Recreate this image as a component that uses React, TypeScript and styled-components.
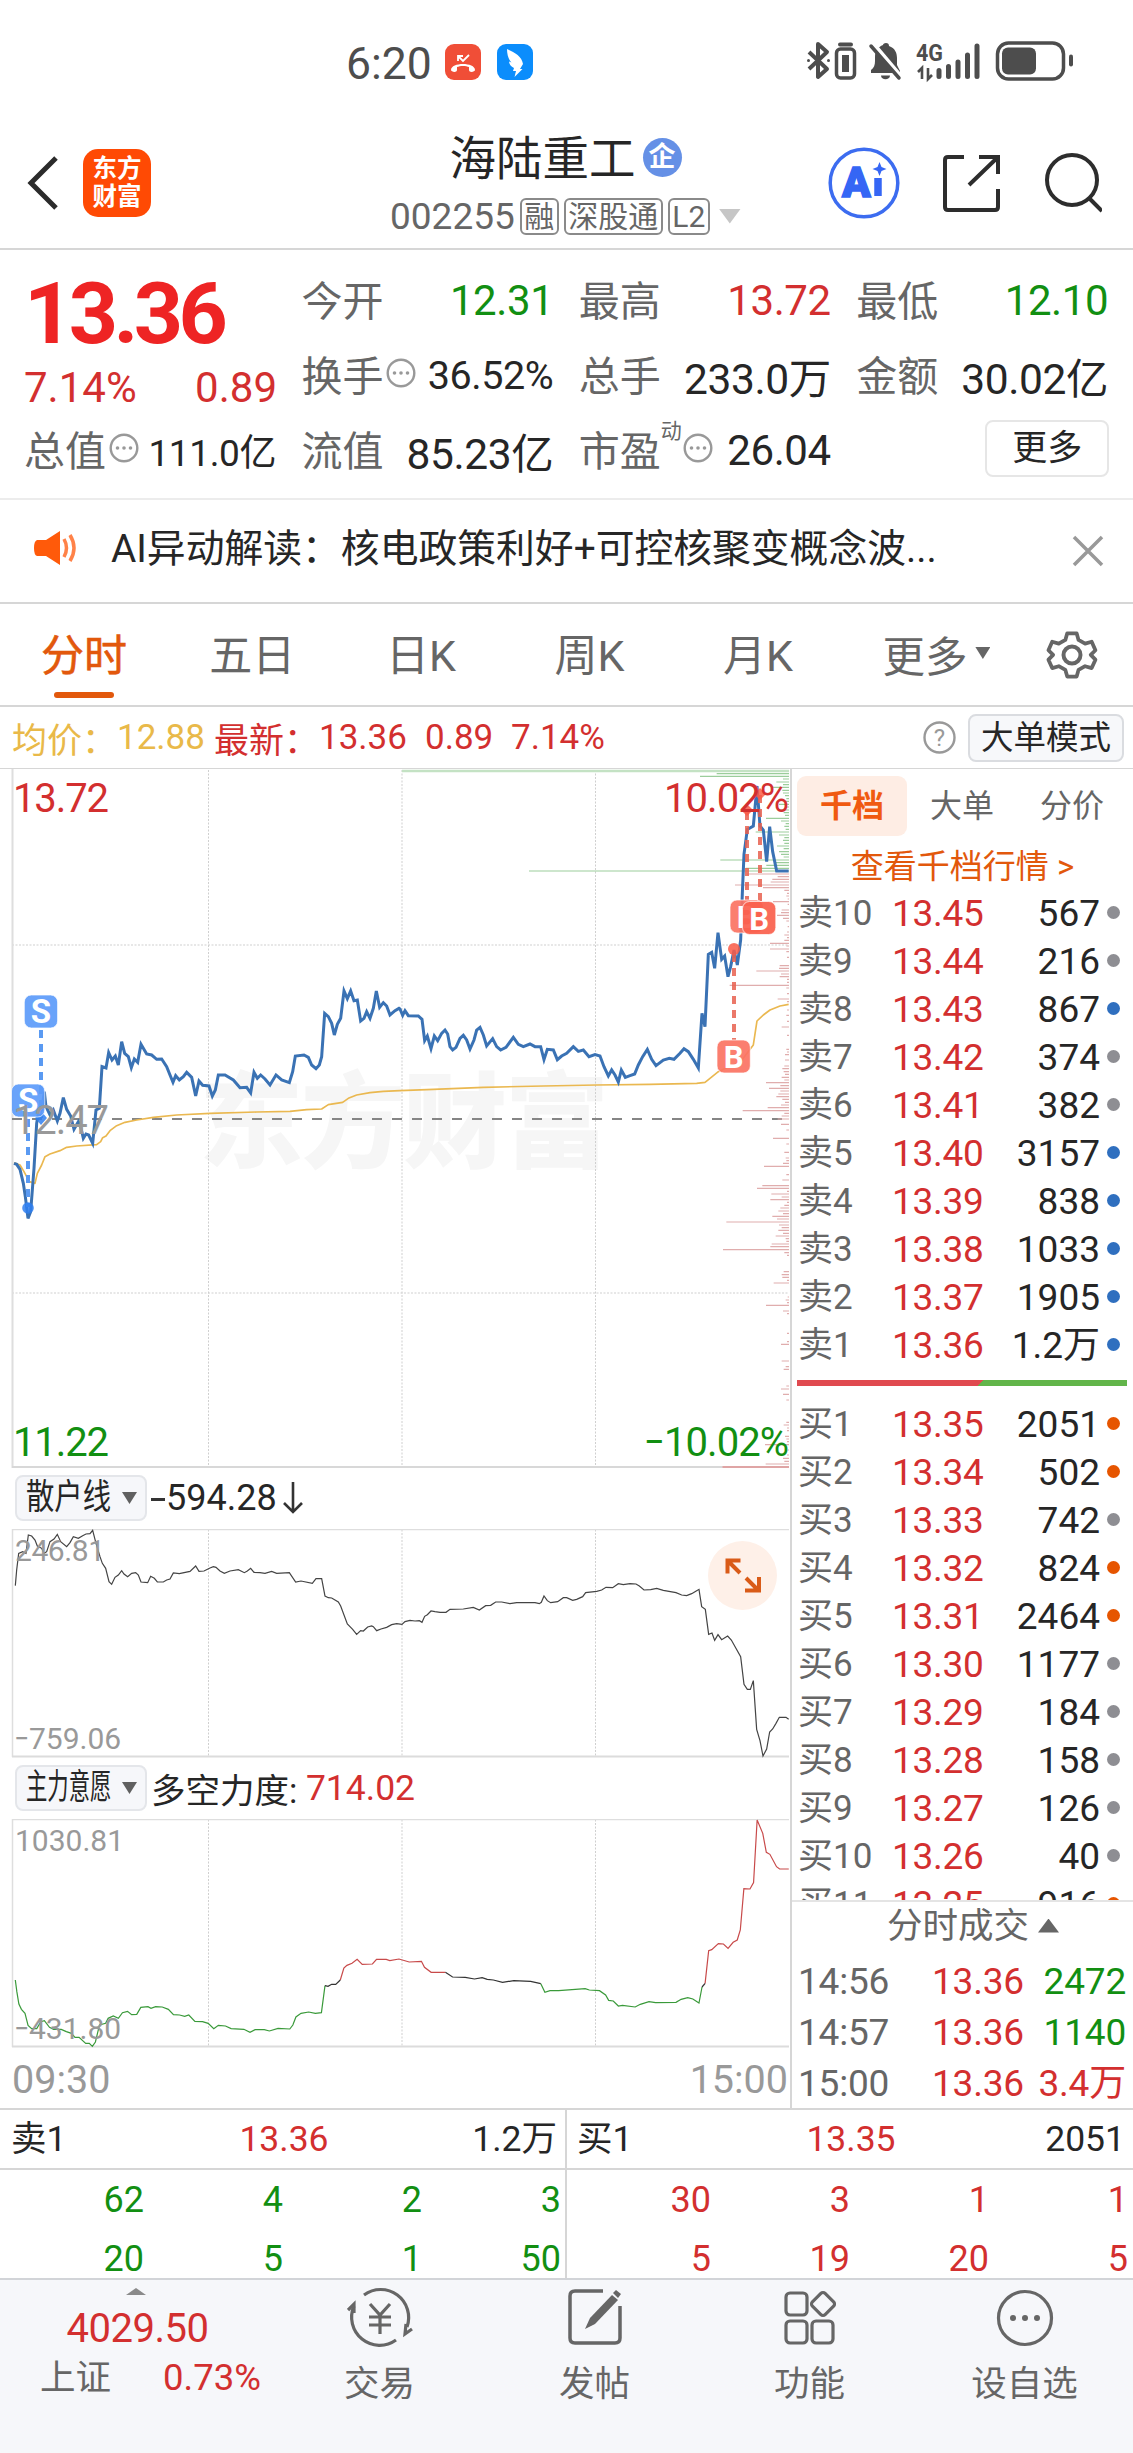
import React from "react";
import styled, { createGlobalStyle } from "styled-components";

const RED = "#d32f2f";
const GREEN = "#128f12";
const INK = "#262626";
const GREY = "#666666";
const PALE = "#999999";
const LINE = "#d6d6d6";
const ACCENT = "#e2580c";

const Global = createGlobalStyle`
  * { box-sizing: border-box; }
  body { margin: 0; background: #fff; }
  #root { font-family: Roboto, "Noto Sans CJK SC", sans-serif; color: ${INK}; }
  svg { display: block; flex: none; }
`;

const Screen = styled.div`
  width: 1133px;
  height: 2453px;
  overflow: hidden;
  background: #fff;
  display: flex;
  flex-direction: column;
  white-space: nowrap;
`;

/* ---------- status bar ---------- */
const StatusBar = styled.div`
  height: 124px;
  flex: none;
  display: flex;
  align-items: center;
  padding: 0 58px 0 346px;
  justify-content: space-between;
  color: #4d4d4d;
`;
const StatusGroup = styled.div`
  display: flex;
  align-items: center;
`;
const Clock = styled.span`
  font-size: 44.5px;
  line-height: 50px;
  width: 99px;
  padding-top: 4px;
`;

/* ---------- header ---------- */
const Header = styled.header`
  height: 126px;
  flex: none;
  border-bottom: 2px solid ${LINE};
  display: grid;
  grid-template-columns: 390px 351px 1fr;
`;
const HeaderSide = styled.div<{ $end?: boolean }>`
  height: 118px;
  display: flex;
  align-items: center;
  justify-content: ${(p) => (p.$end ? "flex-end" : "flex-start")};
  padding: ${(p) => (p.$end ? "0 31px 0 0" : "0 0 0 26px")};
`;
const Brand = styled.div`
  width: 68px;
  height: 68px;
  margin-left: 24px;
  border-radius: 15px;
  background: #ff4a04;
  color: #fff;
  font-weight: 700;
  font-size: 24.5px;
  line-height: 28px;
  display: flex;
  flex-direction: column;
  align-items: center;
  justify-content: center;
`;
const TitleBlock = styled.div`
  padding-top: 3px;
  display: flex;
  flex-direction: column;
  gap: 7px;
`;
const TitleRow = styled.div`
  height: 60px;
  display: flex;
  align-items: center;
  justify-content: center;
  gap: 7px;
  font-size: 46.5px;
`;
const TitleText = styled.span`
  padding-bottom: 5px;
`;
const Badge = styled.span`
  width: 39px;
  height: 39px;
  border-radius: 50%;
  background: #6590e6;
  color: #fff;
  font-weight: 700;
  font-size: 27px;
  line-height: 38px;
  text-align: center;
`;
const CodeRow = styled.div`
  height: 44px;
  display: flex;
  align-items: center;
  gap: 5px;
  font-size: 37px;
  color: ${GREY};
`;
const Tag = styled.span`
  height: 37px;
  border: 2px solid #8a8a8a;
  border-radius: 6px;
  padding: 0 2.5px;
  font-size: 30px;
  line-height: 33px;
`;
const Wedge = styled.i<{ $w: number; $h: number; $c: string; $up?: boolean; $ml?: number }>`
  width: ${(p) => p.$w}px;
  height: ${(p) => p.$h}px;
  margin-left: ${(p) => p.$ml ?? 0}px;
  background: ${(p) => p.$c};
  clip-path: ${(p) => (p.$up ? "polygon(50% 0,100% 100%,0 100%)" : "polygon(0 0,100% 0,50% 100%)")};
  flex: none;
`;

/* ---------- quote summary ---------- */
const Quote = styled.section`
  height: 250px;
  flex: none;
  border-bottom: 2px solid #ececec;
  padding: 13px 23px 0 24px;
  display: grid;
  grid-template-columns: repeat(4, 253px);
  grid-template-rows: repeat(3, 75px);
  column-gap: 24.4px;
`;
const LastPrice = styled.div`
  grid-row: 1 / 3;
  display: flex;
  flex-direction: column;
  color: ${RED};
`;
const BigPrice = styled.div`
  height: 100px;
  line-height: 101px;
  font-size: 86px;
  font-weight: 700;
  color: #ee2424;
  letter-spacing: -4.6px;
`;
const ChangeRow = styled.div`
  height: 50px;
  display: flex;
  justify-content: space-between;
  line-height: 50px;
  font-size: 42px;
`;
const Stat = styled.div`
  display: flex;
  align-items: center;
  font-size: 41px;
`;
const StatLabel = styled.span<{ $lift?: boolean }>`
  color: ${GREY};
  padding-bottom: ${(p) => (p.$lift ? 5 : 0)}px;
`;
const StatValue = styled.span<{ $c?: string; $s?: number }>`
  margin-left: auto;
  padding: 0 1px 1px 0;
  font-size: ${(p) => p.$s ?? 42}px;
  letter-spacing: -0.4px;
  color: ${(p) => p.$c ?? INK};
`;
const Sup = styled.sup`
  font-size: 21px;
  line-height: 20px;
  align-self: flex-start;
  margin-top: 8px;
  color: ${GREY};
`;
const MoreButton = styled.button`
  width: 124px;
  height: 57px;
  margin: 7px 0 0 auto;
  border: 2px solid #e6e6e6;
  border-radius: 8px;
  background: #fff;
  padding: 0;
  font: 35px/50px Roboto, "Noto Sans CJK SC", sans-serif;
  color: ${INK};
`;

/* ---------- news ---------- */
const News = styled.section`
  height: 104px;
  flex: none;
  border-bottom: 2px solid ${LINE};
  display: flex;
  align-items: center;
  padding: 0 29px 6px 33px;
`;
const Headline = styled.span`
  flex: 1;
  margin-left: 33px;
  padding-bottom: 6px;
  font-size: 38.8px;
`;

/* ---------- period tabs ---------- */
const Tabs = styled.nav`
  height: 103px;
  flex: none;
  border-bottom: 2px solid ${LINE};
  display: grid;
  grid-template-columns: 168px repeat(4, 168.6px) 196px 1fr;
`;
const Tab = styled.div<{ $on?: boolean }>`
  display: flex;
  flex-direction: column;
  align-items: center;
  font-size: 43px;
  line-height: 60px;
  padding-top: 22px;
  color: ${(p) => (p.$on ? ACCENT : GREY)};
  -webkit-text-stroke: ${(p) => (p.$on ? "0.6px" : "0")};
  &::after {
    content: "";
    width: 60px;
    height: 6px;
    margin-top: 6px;
    border-radius: 3px;
    background: ${(p) => (p.$on ? ACCENT : "transparent")};
  }
`;
const MoreTab = styled.div`
  display: flex;
  align-items: center;
  padding: 0 0 3px 40px;
  gap: 8px;
  font-size: 42.5px;
  color: ${GREY};
`;
const GearCell = styled.div`
  padding: 26px 0 0 8px;
`;

/* ---------- indicator strip ---------- */
const Strip = styled.div`
  height: 62px;
  flex: none;
  border-bottom: 1px solid ${LINE};
  display: flex;
  align-items: center;
  padding: 0 9px 0 12px;
  font-size: 35px;
  color: ${RED};
`;
const StripItem = styled.span<{ $w: number; $c?: string }>`
  width: ${(p) => p.$w}px;
  color: ${(p) => p.$c ?? RED};
`;
const ModeButton = styled.span`
  width: 156px;
  height: 48px;
  margin-left: 12px;
  border: 2px solid #dadce0;
  border-radius: 8px;
  background: #f7f8fa;
  color: ${INK};
  font-size: 32.5px;
  line-height: 44px;
  text-align: center;
`;

/* ---------- main area ---------- */
const Main = styled.div`
  height: 1341px;
  flex: none;
  display: grid;
  grid-template-columns: 790px 343px;
  border-bottom: 2px solid ${LINE};
`;
const Charts = styled.div`
  padding-left: 11px;
  display: flex;
  flex-direction: column;
`;
const IndicatorBar = styled.div<{ $h: number }>`
  height: ${(p) => p.$h}px;
  flex: none;
  display: flex;
  align-items: center;
  padding: 0 0 1px 4px;
  font-size: 36px;
`;
const Picker = styled.span`
  width: 132px;
  height: 46px;
  border: 2px solid #e4e6ea;
  border-radius: 8px;
  background: #f6f7fa;
  display: flex;
  align-items: center;
  justify-content: space-between;
  padding: 0 8px 0 9px;
  margin-right: 4px;
`;
const Squeezed = styled.span<{ $k: number }>`
  width: 86px;
  font-size: 35px;
  line-height: 40px;
  transform: scaleX(${(p) => p.$k});
  transform-origin: 0 50%;
`;
const IndicatorValue = styled.span<{ $c?: string; $s?: number }>`
  color: ${(p) => p.$c ?? INK};
  font-size: ${(p) => p.$s ?? 36}px;
`;
const Minus = styled.i`
  width: 14px;
  height: 3px;
  margin: 2px 1px 0 0;
  background: #333;
`;
const Axis = styled.div`
  height: 60px;
  display: flex;
  justify-content: space-between;
  padding: 0 2px 0 1px;
  font-size: 39.5px;
  line-height: 63px;
  color: ${PALE};
`;

/* ---------- order book ---------- */
const Book = styled.aside`
  border-left: 2px solid ${LINE};
  display: flex;
  flex-direction: column;
  min-width: 0;
`;
const BookTabs = styled.div`
  height: 74px;
  padding: 7px 0 0 5px;
  display: grid;
  grid-template-columns: repeat(3, 110px);
`;
const BookTab = styled.div<{ $on?: boolean }>`
  height: 60px;
  border-radius: 9px;
  background: ${(p) => (p.$on ? "#feede4" : "transparent")};
  color: ${(p) => (p.$on ? "#f05a10" : GREY)};
  font-weight: ${(p) => (p.$on ? 700 : 400)};
  font-size: 32px;
  line-height: 61px;
  text-align: center;
`;
const BookLink = styled.div`
  height: 47px;
  line-height: 48px;
  font-size: 33px;
  color: ${ACCENT};
  text-align: center;
`;
const Levels = styled.div<{ $h: number }>`
  height: ${(p) => p.$h}px;
  overflow: hidden;
`;
const Level = styled.div`
  height: 48px;
  display: grid;
  grid-template-columns: 94px 100px 1fr 13px;
  align-items: center;
  padding: 0 13px 0 6px;
  font-size: 37px;
  line-height: 48px;
`;
const Side = styled.span`
  color: ${GREY};
  font-size: 35px;
`;
const Price = styled.span`
  color: ${RED};
  letter-spacing: -0.3px;
`;
const Qty = styled.span`
  text-align: right;
  padding-right: 7px;
`;
const Dot = styled.i<{ $c: string }>`
  width: 13px;
  height: 13px;
  margin-top: -3px;
  border-radius: 50%;
  background: ${(p) => p.$c};
`;
const Balance = styled.div`
  height: 31px;
  padding: 10px 6px 0 5px;
  display: flex;
`;
const BalanceTrack = styled.div`
  flex: 1;
  height: 6px;
  background: linear-gradient(130deg, #e04a4f 0 184px, transparent 0), #62b54a;
  background: linear-gradient(135deg, #e04a4f 55.5%, #62b54a 55.6%);
`;
const TradesTitle = styled.div`
  height: 56px;
  border-top: 2px solid #e4e4e4;
  display: flex;
  align-items: center;
  justify-content: center;
  gap: 9px;
  padding: 0 0 7px 21px;
  font-size: 35.5px;
  line-height: 46px;
  color: ${GREY};
`;
const Trade = styled.div`
  height: 51px;
  display: grid;
  grid-template-columns: 134px 90px 1fr;
  padding: 0 7px 0 6px;
  font-size: 37px;
  line-height: 51px;
  letter-spacing: -0.2px;
`;
const TradeCell = styled.span<{ $c: string; $right?: boolean }>`
  color: ${(p) => p.$c};
  text-align: ${(p) => (p.$right ? "right" : "left")};
`;

/* ---------- queue tables ---------- */
const Queues = styled.div`
  height: 168px;
  flex: none;
  overflow: hidden;
  display: grid;
  grid-template-columns: 567px 566px;
`;
const Queue = styled.div<{ $first?: boolean }>`
  border-right: ${(p) => (p.$first ? `2px solid ${LINE}` : "none")};
`;
const QueueHead = styled.div<{ $first?: boolean }>`
  height: 60px;
  border-bottom: 2px solid ${LINE};
  display: grid;
  grid-template-columns: 1fr 1fr 1fr;
  padding: ${(p) => (p.$first ? "0 8px 0 11px" : "0 8px 0 10px")};
  font-size: 35.5px;
  line-height: 59px;
`;
const QueueCell = styled.span<{ $c?: string; $a: string }>`
  color: ${(p) => p.$c ?? INK};
  text-align: ${(p) => p.$a};
`;
const QueueRow = styled.div<{ $c: string }>`
  height: 59px;
  display: grid;
  grid-template-columns: 144px repeat(3, 139px);
  font-size: 36px;
  line-height: 61px;
  text-align: right;
  color: ${(p) => p.$c};
`;

/* ---------- bottom navigation ---------- */
const Bottom = styled.footer`
  flex: 1;
  border-top: 2px solid #d2d4d8;
  background: #f6f7fa;
  display: grid;
  grid-template-columns: 272px repeat(4, 215px);
`;
const IndexCell = styled.div`
  display: flex;
  flex-direction: column;
  align-items: center;
  padding-top: 8px;
  color: ${RED};
`;
const IndexValue = styled.div`
  font-size: 40px;
  line-height: 50px;
  margin-top: 9px;
  padding-left: 3px;
  letter-spacing: -0.5px;
`;
const IndexRow = styled.div`
  display: flex;
  gap: 52px;
  align-self: flex-start;
  padding-left: 40px;
  font-size: 36.5px;
  line-height: 48px;
`;
const IndexName = styled.span`
  color: ${GREY};
  font-size: 35.5px;
`;
const NavItem = styled.div`
  display: flex;
  flex-direction: column;
  align-items: center;
  padding-top: 6px;
  gap: 13px;
  font-size: 35.5px;
  line-height: 46px;
  color: ${GREY};
`;

/* ---------- icons ---------- */
const Dots = ({ ml }: { ml: number }) => (
  <svg width="30" height="30" viewBox="0 0 30 30" style={{ marginLeft: ml, marginTop: -6 }}>
    <circle cx="15" cy="15" r="13.3" fill="none" stroke="#999" strokeWidth="2.4" />
    <g fill="#999"><circle cx="8.5" cy="15" r="1.8" /><circle cx="15" cy="15" r="1.8" /><circle cx="21.5" cy="15" r="1.8" /></g>
  </svg>
);

const StatusIcons = () => (
  <svg width="270" height="42" viewBox="806 42 270 42" fill="none" stroke="#4d4d4d">
    <path d="M810 53l18 17-9 8V45l9 8-18 17" strokeWidth="4" strokeLinejoin="round" />
    <circle cx="809.5" cy="61.500" r="1.500" fill="#4d4d4d" stroke="none" /><circle cx="829.500" cy="61.500" r="1.500" fill="#4d4d4d" stroke="none" />
    <rect x="837.500" y="50" width="18" height="29" rx="4" strokeWidth="3.500" />
    <rect x="843" y="56" width="7" height="17" fill="#4d4d4d" stroke="none" />
    <path d="M841 45.500h11" strokeWidth="4" strokeLinecap="round" />
    <path d="M887 44c2 0 3 1 3 3 6 2 8 7 8 12v7l3 6v2h-29v-3c3-2 4-5 4-9v-4c0-6 3-10 8-12 0-1 1-2 3-2z" fill="#4d4d4d" stroke="none" />
    <path d="M882 76.500h9c0 5-9 5-9 0z" fill="#4d4d4d" stroke="none" />
    <path d="M875 46l27 32" stroke="#fff" strokeWidth="5" /><path d="M872 47l28 32" strokeWidth="3.500" strokeLinecap="round" />
    <text x="917" y="62" fontSize="24" fontWeight="700" fill="#4d4d4d" stroke="none" textLength="27" lengthAdjust="spacingAndGlyphs">4G</text>
    <path d="M923 80V69l-4 4M929 69v11l4-4" strokeWidth="2.600" />
    <g strokeWidth="5" strokeLinecap="round"><path d="M940 71.500v6M949.500 67.500v10M959 63v14.500M968.500 56v21.500M978 47v30.500" /></g>
    <rect x="998.500" y="44" width="66" height="36" rx="11" strokeWidth="3.500" />
    <rect x="1003" y="48.500" width="34" height="27" rx="6" fill="#4d4d4d" stroke="none" />
    <path d="M1072 57.500v8" strokeWidth="4" strokeLinecap="round" />
  </svg>
);

/* ---------- price chart data: x in thirds of a pixel, y in thirds ---------- */
const PRICE =
  "42,1210 50,1213 60,1228 70,1270 76,1310 84,1375 92,1355 97,1290 102,1225 110,1090 115,1060 125,1050 133,995 138,1040 150,1065 160,1050 172,1083 180,1060 190,1013 200,1048 212,1068 222,1108 235,1085 242,1100 250,1135 258,1122 266,1125 278,1150 284,1090 288,1050 298,1045 306,920 318,924 326,878 336,900 346,888 355,915 365,845 374,880 385,890 394,923 403,897 413,907 423,853 440,882 455,885 470,898 485,897 500,920 510,945 519,967 527,947 538,960 550,950 560,937 575,952 587,1008 597,963 608,976 627,978 637,1008 646,990 655,945 675,945 700,960 720,983 740,982 752,999 762,937 772,955 782,945 795,957 810,975 828,945 845,960 868,968 878,935 886,888 912,885 925,892 935,915 948,926 958,915 965,890 974,760 985,770 995,790 1003,825 1012,793 1022,775 1032,693 1042,716 1052,693 1062,722 1072,720 1082,783 1092,775 1100,755 1110,775 1120,745 1129,693 1139,742 1150,728 1160,738 1170,765 1185,752 1197,745 1200,747 1208,766 1215,752 1225,767 1255,768 1266,778 1274,842 1282,828 1293,866 1303,828 1313,842 1325,820 1335,810 1343,822 1350,860 1358,870 1368,862 1380,835 1390,826 1400,840 1410,867 1422,840 1430,810 1440,802 1450,825 1460,858 1478,836 1490,860 1502,870 1518,862 1540,832 1555,853 1570,860 1590,852 1605,860 1622,860 1632,899 1642,868 1660,870 1672,899 1685,888 1700,880 1720,860 1735,874 1750,870 1767,890 1785,884 1800,888 1812,920 1825,948 1835,930 1845,945 1855,966 1864,930 1876,952 1890,947 1904,942 1915,915 1928,890 1942,868 1955,898 1968,917 1990,900 2008,895 2022,898 2040,880 2052,866 2065,875 2080,898 2095,924 2106,760 2115,800 2125,583 2135,577 2144,625 2154,518 2165,598 2174,588 2184,650 2192,620 2202,570 2212,615 2222,540 2227,400 2232,283 2242,208 2260,198 2271,78 2280,198 2290,210 2300,305 2309,200 2318,275 2330,333 2366,333";
const AVERAGE =
  "42,1208 60,1215 72,1235 88,1265 105,1270 112,1240 125,1215 135,1190 150,1182 180,1172 200,1162 230,1158 290,1154 302,1145 308,1133 318,1128 330,1112 350,1097 375,1087 410,1080 460,1072 530,1065 630,1060 770,1056 870,1054 920,1049 965,1047 985,1034 1028,1027 1045,1015 1070,1005 1110,998 1150,994 1200,992 1300,988 1450,982 1630,978 1790,975 1950,973 2090,970 2115,967 2130,955 2155,935 2190,918 2220,908 2237,885 2260,855 2271,783 2290,765 2310,750 2340,738 2366,733";
const SELL_BARS =
  "41:217 49:267 57:18 66:38 74:18 82:50 91:20 99:18 107:12 116:8 124:12 133:30 141:8 150:30 158:16 166:12 175:69 183:24 191:10 199:14 208:10 216:100 225:30 233:14 241:18 250:14 258:36 266:16 275:30 283:24 291:16 300:206 308:40 316:68 325:130 333:780";
const BUY_BARS =
  "342:127 350:34 358:50 366:55 375:162 383:78 391:14 400:6 408:8 417:4 425:48 433:4 450:22 458:24 466:36 475:18 483:8 500:4 516:6 525:14 533:6 541:14 550:57 558:8 567:57 575:8 592:6 617:28 625:30 633:98 642:24 650:28 658:6 667:6 676:178 684:8 701:6 717:34 725:6 750:6 766:8 784:6 801:22 826:6 868:8 876:6 884:12 900:12 918:14 926:20 935:16 943:12 952:22 960:14 968:69 977:26 985:60 993:26 1002:32 1010:38 1018:20 1027:12 1035:24 1043:64 1052:139 1060:14 1068:22 1077:34 1093:24 1110:8 1135:48 1152:8 1177:14 1194:10 1202:8 1210:18 1219:75 1244:8 1260:20 1277:80 1285:96 1294:6 1302:53 1311:22 1319:56 1327:6 1336:14 1344:26 1353:32 1361:18 1369:50 1377:36 1386:188 1395:30 1403:22 1411:32 1420:18 1428:40 1436:10 1444:8 1452:52 1460:56 1469:198 1478:14 1486:6 1535:16 1544:22 1552:20 1561:6 1569:46 1611:4 1620:10 1628:6 1636:69 1653:18 1661:6 1720:6 1745:6 1753:24 1803:22 1820:10 1828:16 1878:8 1887:24 1903:18 1920:8 1987:8 1995:16 2004:6 2012:6 2029:12 2037:8 2045:6 2054:72 2070:4 2085:6 2095:18 2104:14 2112:70";
const barPath = (s: string) =>
  s.split(" ").map((b) => { const [y, l] = b.split(":"); return `M2367 ${y}h-${l}`; }).join("");

const RETAIL =
  "46,437 50,390 56,340 68,335 78,340 85,285 95,288 105,300 112,318 125,325 132,340 140,335 150,305 162,297 172,283 182,305 200,320 210,308 220,290 235,295 248,287 258,282 270,281 278,271 288,310 300,350 307,370 317,385 327,425 335,433 345,412 355,405 365,392 372,402 383,410 395,400 407,398 415,405 423,426 443,428 452,409 463,415 472,426 490,426 500,420 510,417 520,399 538,401 570,394 587,378 597,394 612,393 630,384 640,380 648,382 660,393 673,400 690,393 715,389 733,398 742,393 752,385 762,397 780,398 795,400 815,394 830,400 868,398 887,426 903,423 937,430 948,416 965,416 975,468 985,473 995,474 1015,486 1022,498 1042,552 1058,568 1070,583 1082,572 1090,573 1103,561 1115,558 1120,560 1130,572 1143,567 1160,562 1175,554 1190,551 1206,553 1215,545 1230,541 1245,543 1258,542 1266,547 1274,529 1282,524 1293,513 1305,515 1320,517 1338,517 1350,508 1390,507 1420,502 1438,510 1457,497 1472,496 1487,486 1505,486 1530,491 1550,488 1605,488 1618,491 1624,487 1632,468 1642,482 1652,488 1673,485 1690,473 1700,473 1718,481 1730,478 1748,470 1757,458 1790,454 1805,450 1818,442 1838,443 1855,431 1870,434 1890,431 1908,432 1918,438 1932,450 1952,449 1970,445 1990,451 2028,458 2045,465 2060,467 2075,461 2090,452 2097,448 2105,500 2116,508 2126,583 2136,579 2144,601 2154,584 2165,599 2183,588 2194,600 2222,650 2232,733 2242,748 2251,748 2260,722 2270,868 2280,902 2289,948 2300,927 2309,876 2318,867 2328,850 2338,832 2358,832 2366,838";

const MAIN_FORCE: [string, string][] = [
  ["#3a9a3a", "30,690 33,725 37,762 42,778 49,790 55,826 62,836 72,836 80,815 87,812 97,832 105,838 120,838 130,845 140,850 147,862 155,862 168,880 175,880 181,889 187,876 195,825 207,820 212,805 222,798 232,805 240,788 250,784 258,794 268,793 276,772 290,770 296,775 305,770 318,771 330,778 340,794 352,795 362,799 370,795 382,814 397,815 408,820 419,836 428,826 442,828 453,836 478,838 490,847 500,839 518,839 528,843 545,835 568,837 574,825 580,801 590,790 605,786 618,790 630,788 637,707"],
  ["#333", "637,707 643,709 650,703 658,703 667,690"],
  ["#c84a4a", "667,690 674,654 680,646 690,640 700,628 710,643 730,642 738,628 757,628 764,632 782,627 802,636 826,634 832,652 845,667 873,667"],
  ["#333", "873,667 887,681 912,682 930,687 945,683 955,688 967,690 985,697 1007,692 1040,694 1060,701"],
  ["#3a9a3a", "1060,701 1068,727 1078,722 1095,722 1147,716 1155,720 1175,722 1187,735 1193,751 1202,753 1212,768 1220,766 1245,771 1255,763 1272,755 1285,758 1325,757 1335,748 1348,743 1358,747 1370,759 1376,711"],
  ["#333", "1376,711 1382,700"],
  ["#c84a4a", "1382,700 1389,602 1395,599 1408,581 1418,582 1427,595 1437,577 1445,570 1451,540 1458,416 1470,417 1477,398 1484,210 1495,250 1502,307 1509,313 1522,350 1528,357 1546,357"],
];

const Marker = ({ x, y, c, t }: { x: number; y: number; c: string; t: string }) => (
  <g>
    <rect x={x} y={y} width="33.300" height="33" rx="7" fill={c} fillOpacity=".92" stroke="#fff" strokeOpacity=".7" strokeWidth="1" />
    <text x={x + 16.600} y={y + 28} textAnchor="middle" fontSize={t === "S" ? 33 : 31} fontWeight="700" fill="#fff">{t}</text>
  </g>
);

const PriceChart = () => (
  <svg width="779" height="699" viewBox="11 769 779 699">
    <g fill="#f6f6f6" fontSize="104" fontWeight="900" fontFamily="Noto Sans CJK SC, sans-serif"><text x="199" y="1160" textLength="410">东方财富</text></g>
    <path d="M208.500 770v697M402 770v697M595.500 770v697M12 945h777M12 1293h777" stroke="#cfcfcf" strokeWidth="1" strokeDasharray="2 1.500" fill="none" />
    <path d="M12.500 769v699" stroke="#dedede" strokeWidth="2" />
    <path d="M12 1467h777" stroke="#d8d8d8" strokeWidth="2" />
    <path d="M12 1119h770" stroke="#858585" strokeWidth="2" strokeDasharray="10 10" />
    <path d="M402 771h387" stroke="#c4e2c4" strokeWidth="2.500" />
    <path d="M722.500 1467H789" stroke="#dfa5a5" strokeWidth="2" />
    <g transform="translate(0 760) scale(.33333)" fill="none" strokeLinejoin="round">
      <path d={barPath(SELL_BARS)} stroke="#9bcd9b" strokeWidth="3.600" />
      <path d={barPath(BUY_BARS)} stroke="#e0adad" strokeWidth="3.600" />
      <polyline points={AVERAGE} stroke="#eab850" strokeWidth="5" />
      <polyline points={PRICE} stroke="#3a72b4" strokeWidth="9" strokeLinejoin="miter" />
    </g>
    <g strokeWidth="4" fill="none">
      <path d="M41 1030v88M28 1119v88" stroke="#5a9af2" strokeDasharray="8 6" />
      <path d="M734 954v86M747 812v88M760 795v106" stroke="#e8604f" strokeOpacity=".85" strokeDasharray="8 6" />
    </g>
    <g fill="#2f7ff0" fillOpacity=".85"><circle cx="28" cy="1208" r="5.800" /><path d="M41 1111l6 7-6 7-6-7z" /></g>
    <g fill="#fa5a46" fillOpacity=".85"><circle cx="734" cy="949" r="6" /><path d="M747 804l6 6-6 6-6-6zM760 788l6 6-6 6-6-6z" /></g>
    <Marker x={24.300} y={995} c="#5c9bfa" t="S" />
    <Marker x={11.500} y={1084} c="#5c9bfa" t="S" />
    <Marker x={717} y={1040} c="#fb7363" t="B" />
    <Marker x={730} y={900} c="#fb7363" t="B" />
    <Marker x={742.500} y={901.500} c="#fa5f4c" t="B" />
    <g fontSize="40" fill={RED}><text x="13" y="812" textLength="96">13.72</text><text x="789" y="812" textAnchor="end" textLength="125">10.02%</text></g>
    <g fontSize="40" fill={GREEN}>
      <text x="13" y="1456" textLength="96">11.22</text>
      <text x="644" y="1456" textLength="21" lengthAdjust="spacingAndGlyphs">−</text>
      <text x="789" y="1456" textAnchor="end" textLength="125">10.02%</text>
    </g>
    <text x="13" y="1134" fontSize="40" textLength="96" fill={PALE}>12.47</text>
  </svg>
);

const SubFrame = ({ top, bottom }: { top: number; bottom: number }) => (
  <g fill="none">
    <path d={`M208.500 ${top}V${bottom}M402 ${top}V${bottom}M595.500 ${top}V${bottom}`} stroke="#cfcfcf" strokeDasharray="2 1.500" />
    <path d={`M789 ${top}H12.500V${bottom}`} stroke="#dedede" strokeWidth="1.500" />
    <path d={`M12 ${bottom - 0.5}H789`} stroke="#dcdcdc" strokeWidth="2" />
  </g>
);

const RetailChart = () => (
  <svg width="779" height="229" viewBox="11 1529 779 229">
    <SubFrame top={1529.5} bottom={1757} />
    <polyline points={RETAIL} transform="translate(0 1440) scale(.33333)" fill="none" stroke="#444" strokeWidth="3.600" />
    <g fontSize="30" fill={PALE}>
      <text x="15" y="1561" textLength="90">246.81</text>
      <text x="14" y="1749" textLength="15" lengthAdjust="spacingAndGlyphs">−</text>
      <text x="29" y="1749">759.06</text>
    </g>
    <circle cx="742.500" cy="1575.500" r="34.500" fill="#fef0e8" />
    <path d="M740.500 1560.500h-13v13M728 1561l12 12M759 1577v13.500h-14M758 1590l-12-12" fill="none" stroke="#d95b18" strokeWidth="4" />
  </svg>
);

const MainForceChart = () => (
  <svg width="779" height="229" viewBox="11 1819 779 229">
    <SubFrame top={1819.5} bottom={2047} />
    {MAIN_FORCE.map(([c, pts], i) => (
      <polyline key={i} points={pts} transform="translate(0 1750) scale(.5102 .33333)" fill="none" stroke={c} strokeWidth="1.200" vectorEffect="non-scaling-stroke" />
    ))}
    <g fontSize="30" fill={PALE}>
      <text x="15" y="1851">1030.81</text>
      <text x="14" y="2039" textLength="15" lengthAdjust="spacingAndGlyphs">−</text>
      <text x="29" y="2039">431.80</text>
    </g>
  </svg>
);

const STATS: { l: string; v: string; c?: string; dots?: boolean; sup?: string; s?: number }[][] = [
  [{ l: "今开", v: "12.31", c: GREEN }, { l: "最高", v: "13.72", c: RED }, { l: "最低", v: "12.10", c: GREEN }],
  [{ l: "换手", v: "36.52%", dots: true, s: 39.5 }, { l: "总手", v: "233.0万", s: 42.5 }, { l: "金额", v: "30.02亿", s: 42.5 }],
  [{ l: "总值", v: "111.0亿", dots: true, s: 37 }, { l: "流值", v: "85.23亿", s: 42.5 }, { l: "市盈", v: "26.04", dots: true, sup: "动" }],
];

const G = "#8e8e93", B = "#2f6fbf", O = "#e65500";
const ASKS = [
  ["卖10", "13.45", "567", G], ["卖9", "13.44", "216", G], ["卖8", "13.43", "867", B], ["卖7", "13.42", "374", G],
  ["卖6", "13.41", "382", G], ["卖5", "13.40", "3157", B], ["卖4", "13.39", "838", B], ["卖3", "13.38", "1033", B],
  ["卖2", "13.37", "1905", B], ["卖1", "13.36", "1.2万", B],
];
const BIDS = [
  ["买1", "13.35", "2051", O], ["买2", "13.34", "502", O], ["买3", "13.33", "742", G], ["买4", "13.32", "824", O],
  ["买5", "13.31", "2464", O], ["买6", "13.30", "1177", G], ["买7", "13.29", "184", G], ["买8", "13.28", "158", G],
  ["买9", "13.27", "126", G], ["买10", "13.26", "40", G], ["买11", "13.25", "916", O],
];
const TRADES = [["14:56", "13.36", "2472", GREEN], ["14:57", "13.36", "1140", GREEN], ["15:00", "13.36", "3.4万", RED]];

const LevelRows = ({ rows }: { rows: string[][] }) => (
  <>
    {rows.map(([s, p, q, c]) => (
      <Level key={s}><Side>{s}</Side><Price>{p}</Price><Qty>{q}</Qty><Dot $c={c} /></Level>
    ))}
  </>
);

export default function App() {
  return (
    <Screen>
      <Global />
      <StatusBar>
        <StatusGroup>
          <Clock>6:20</Clock>
          <svg width="88" height="38" viewBox="445 44 88 38">
            <rect x="445" y="45" width="36" height="36" rx="9" fill="#f04e37" />
            <path d="M451 71c0-8 24-8 24 0 0 2-6 3-6 0v-3c-3-1.500-9-1.500-12 0v3c0 3-6 2-6 0z" fill="#fff" />
            <path d="M458 62v-5h5M458 57l5 5 6-6" fill="none" stroke="#fff" strokeWidth="1.800" />
            <rect x="497" y="45" width="36" height="36" rx="9" fill="#0b8dfc" />
            <path d="M507 50c7 3 15 7 16 15l-3 5h2.500l-8 8 1.500-6h-3l1-3c-3-1.500-5-4-5-6.500l2.500 1c-3-3-4.500-8-4.500-13.500z" fill="#fff" />
          </svg>
        </StatusGroup>
        <StatusIcons />
      </StatusBar>

      <Header>
        <HeaderSide>
          <svg width="33" height="54" viewBox="0 0 33 54"><path d="M30 2L5 27l25 25" fill="none" stroke="#2b2b2b" strokeWidth="5" /></svg>
          <Brand><span>东方</span><span>财富</span></Brand>
        </HeaderSide>
        <TitleBlock>
          <TitleRow><TitleText>海陆重工</TitleText><Badge>企</Badge></TitleRow>
          <CodeRow>
            002255<Tag>融</Tag><Tag>深股通</Tag><Tag>L2</Tag>
            <Wedge $w={22} $h={15} $c="#c6c6c6" $ml={4} />
          </CodeRow>
        </TitleBlock>
        <HeaderSide $end>
          <svg width="274" height="74" viewBox="828 146 274 74" fill="none">
            <circle cx="864" cy="183" r="33.800" stroke="#3c6cf0" strokeWidth="3.500" />
            <text x="842" y="197" fontSize="42" fontWeight="900" fill="#3566f5" stroke="#3566f5" strokeWidth="1.500">A</text>
            <path d="M878 178v18" stroke="#3566f5" strokeWidth="7.500" />
            <path d="M879.500 162l2 5 5 2-5 2-2 5-2-5-5-2 5-2z" fill="#3566f5" />
            <path d="M964 157h-16q-3 0-3 3v47q0 3 3 3h47q3 0 3-3v-18M979 157h19v17M997 158l-28 27" stroke="#2d2d2d" strokeWidth="4" />
            <circle cx="1072" cy="180" r="25" stroke="#2d2d2d" strokeWidth="4" />
            <path d="M1089 198l13 13" stroke="#2d2d2d" strokeWidth="4" />
          </svg>
        </HeaderSide>
      </Header>

      <Quote>
        <LastPrice>
          <BigPrice>13.36</BigPrice>
          <ChangeRow><span>7.14%</span><span>0.89</span></ChangeRow>
        </LastPrice>
        {STATS.flat().map((s) => (
          <Stat key={s.l}>
            <StatLabel $lift>{s.l}</StatLabel>
            {s.sup && <Sup>{s.sup}</Sup>}
            {s.dots && <Dots ml={s.sup ? 1 : 3} />}
            <StatValue $c={s.c} $s={s.s}>{s.v}</StatValue>
          </Stat>
        ))}
        <MoreButton>更多</MoreButton>
      </Quote>

      <News>
        <svg width="45" height="36" viewBox="0 0 45 36">
          <path d="M4 10h9L27 1v34L13 26H4q-3-1-3-8t3-8z" fill="#ff5a0a" />
          <path d="M31 9q5 9 0 18M37 5q8 13 0 26" fill="none" stroke="#ff8248" strokeWidth="3.500" />
        </svg>
        <Headline>AI异动解读：核电政策利好+可控核聚变概念波...</Headline>
        <svg width="32" height="32" viewBox="0 0 32 32" style={{ marginTop: 6 }}><path d="M2 2l28 28M30 2L2 30" stroke="#999" strokeWidth="3.500" /></svg>
      </News>

      <Tabs>
        <Tab $on>分时</Tab><Tab>五日</Tab><Tab>日K</Tab><Tab>周K</Tab><Tab>月K</Tab>
        <MoreTab>更多<Wedge $w={15} $h={12} $c={GREY} /></MoreTab>
        <GearCell>
          <svg width="52" height="52" viewBox="0 0 52 52" fill="none" stroke="#666" strokeWidth="4">
            <path d="M21 3h10l2 7 7 4 7-2 4 9-5 5 5 5-4 9-7-2-7 4-2 7H21l-2-7-7-4-7 2-4-9 5-5-5-5 4-9 7 2 7-4z" strokeLinejoin="round" transform="translate(1.500 .5) scale(.94)" />
            <circle cx="26" cy="25" r="8.500" />
          </svg>
        </GearCell>
      </Tabs>

      <Strip>
        <StripItem $w={105} $c="#e9b949">均价：</StripItem>
        <StripItem $w={97} $c="#e9b949">12.88</StripItem>
        <StripItem $w={105}>最新：</StripItem>
        <StripItem $w={106}>13.36</StripItem>
        <StripItem $w={86}>0.89</StripItem>
        <StripItem $w={412}>7.14%</StripItem>
        <svg width="33" height="33" viewBox="0 0 33 33">
          <circle cx="16.500" cy="16.500" r="15" fill="none" stroke="#999" strokeWidth="2.400" />
          <text x="16.500" y="25" textAnchor="middle" fontSize="24" fill="#999">?</text>
        </svg>
        <ModeButton>大单模式</ModeButton>
      </Strip>

      <Main>
        <Charts>
          <PriceChart />
          <IndicatorBar $h={61}>
            <Picker><Squeezed $k={0.81}>散户线</Squeezed><Wedge $w={15} $h={12} $c="#606060" /></Picker>
            <Minus />
            <IndicatorValue>594.28</IndicatorValue>
            <svg width="26" height="34" viewBox="0 0 26 34"><path d="M16 1v30M7 22l9 9 9-9" fill="none" stroke="#333" strokeWidth="2.600" /></svg>
          </IndicatorBar>
          <RetailChart />
          <IndicatorBar $h={61}>
            <Picker><Squeezed $k={0.61}>主力意愿</Squeezed><Wedge $w={15} $h={12} $c="#606060" /></Picker>
            <IndicatorValue $s={34.5}>多空力度:&nbsp;</IndicatorValue>
            <IndicatorValue $c={RED} $s={35.5}>714.02</IndicatorValue>
          </IndicatorBar>
          <MainForceChart />
          <Axis><span>09:30</span><span>15:00</span></Axis>
        </Charts>
        <Book>
          <BookTabs><BookTab $on>千档</BookTab><BookTab>大单</BookTab><BookTab>分价</BookTab></BookTabs>
          <BookLink>查看千档行情 &gt;</BookLink>
          <Levels $h={480}><LevelRows rows={ASKS} /></Levels>
          <Balance><BalanceTrack /></Balance>
          <Levels $h={499}><LevelRows rows={BIDS} /></Levels>
          <TradesTitle>分时成交<Wedge $w={21} $h={14} $c={GREY} $up /></TradesTitle>
          {TRADES.map(([t, p, q, c]) => (
            <Trade key={t}>
              <TradeCell $c={GREY}>{t}</TradeCell><TradeCell $c={RED}>{p}</TradeCell><TradeCell $c={c} $right>{q}</TradeCell>
            </Trade>
          ))}
        </Book>
      </Main>

      <Queues>
        <Queue $first>
          <QueueHead $first><QueueCell $a="left">卖1</QueueCell><QueueCell $a="center" $c={RED}>13.36</QueueCell><QueueCell $a="right">1.2万</QueueCell></QueueHead>
          <QueueRow $c={GREEN}><span>62</span><span>4</span><span>2</span><span>3</span></QueueRow>
          <QueueRow $c={GREEN}><span>20</span><span>5</span><span>1</span><span>50</span></QueueRow>
        </Queue>
        <Queue>
          <QueueHead><QueueCell $a="left">买1</QueueCell><QueueCell $a="center" $c={RED}>13.35</QueueCell><QueueCell $a="right">2051</QueueCell></QueueHead>
          <QueueRow $c={RED}><span>30</span><span>3</span><span>1</span><span>1</span></QueueRow>
          <QueueRow $c={RED}><span>5</span><span>19</span><span>20</span><span>5</span></QueueRow>
        </Queue>
      </Queues>

      <Bottom>
        <IndexCell>
          <Wedge $w={20} $h={7} $c="#8a8a8a" $up />
          <IndexValue>4029.50</IndexValue>
          <IndexRow><IndexName>上证</IndexName><span>0.73%</span></IndexRow>
        </IndexCell>
        <NavItem>
          <svg width="66" height="62" viewBox="0 0 66 62" fill="none" stroke="#666" strokeWidth="3.200">
            <path d="M17 9A28 28 0 0 1 60 41M49 54A28 28 0 0 1 7 20" />
            <path d="M1 24l6-6v9M65 43l-7 5 1-10" />
            <path d="M23 18l10 11 10-11M22 31h22M22 39h22M33 29v19" />
          </svg>
          交易
        </NavItem>
        <NavItem>
          <svg width="56" height="62" viewBox="0 0 56 62" fill="none" stroke="#666" strokeWidth="3.500">
            <path d="M36 5H8q-5 0-5 5v42q0 5 5 5h40q5 0 5-5V20" />
            <path d="M18 43l5-11L45 9l6 5-23 24z" fill="#666" stroke="none" /><path d="M46 7l3-3 5 4-3 4z" fill="#666" stroke="none" />
          </svg>
          发帖
        </NavItem>
        <NavItem>
          <svg width="52" height="62" viewBox="0 0 52 62" fill="none" stroke="#666" strokeWidth="3.200">
            <rect x="2" y="7" width="21" height="22" rx="4" /><rect x="2" y="35" width="21" height="22" rx="4" /><rect x="28" y="35" width="21" height="22" rx="4" />
            <rect x="30" y="9" width="18" height="18" rx="3" transform="rotate(45 39 18)" />
          </svg>
          功能
        </NavItem>
        <NavItem>
          <svg width="58" height="62" viewBox="0 0 58 62">
            <circle cx="29" cy="32" r="26.500" fill="none" stroke="#666" strokeWidth="3.200" />
            <g fill="#666"><circle cx="17" cy="32" r="3" /><circle cx="29" cy="32" r="3" /><circle cx="41" cy="32" r="3" /></g>
          </svg>
          设自选
        </NavItem>
      </Bottom>
    </Screen>
  );
}
